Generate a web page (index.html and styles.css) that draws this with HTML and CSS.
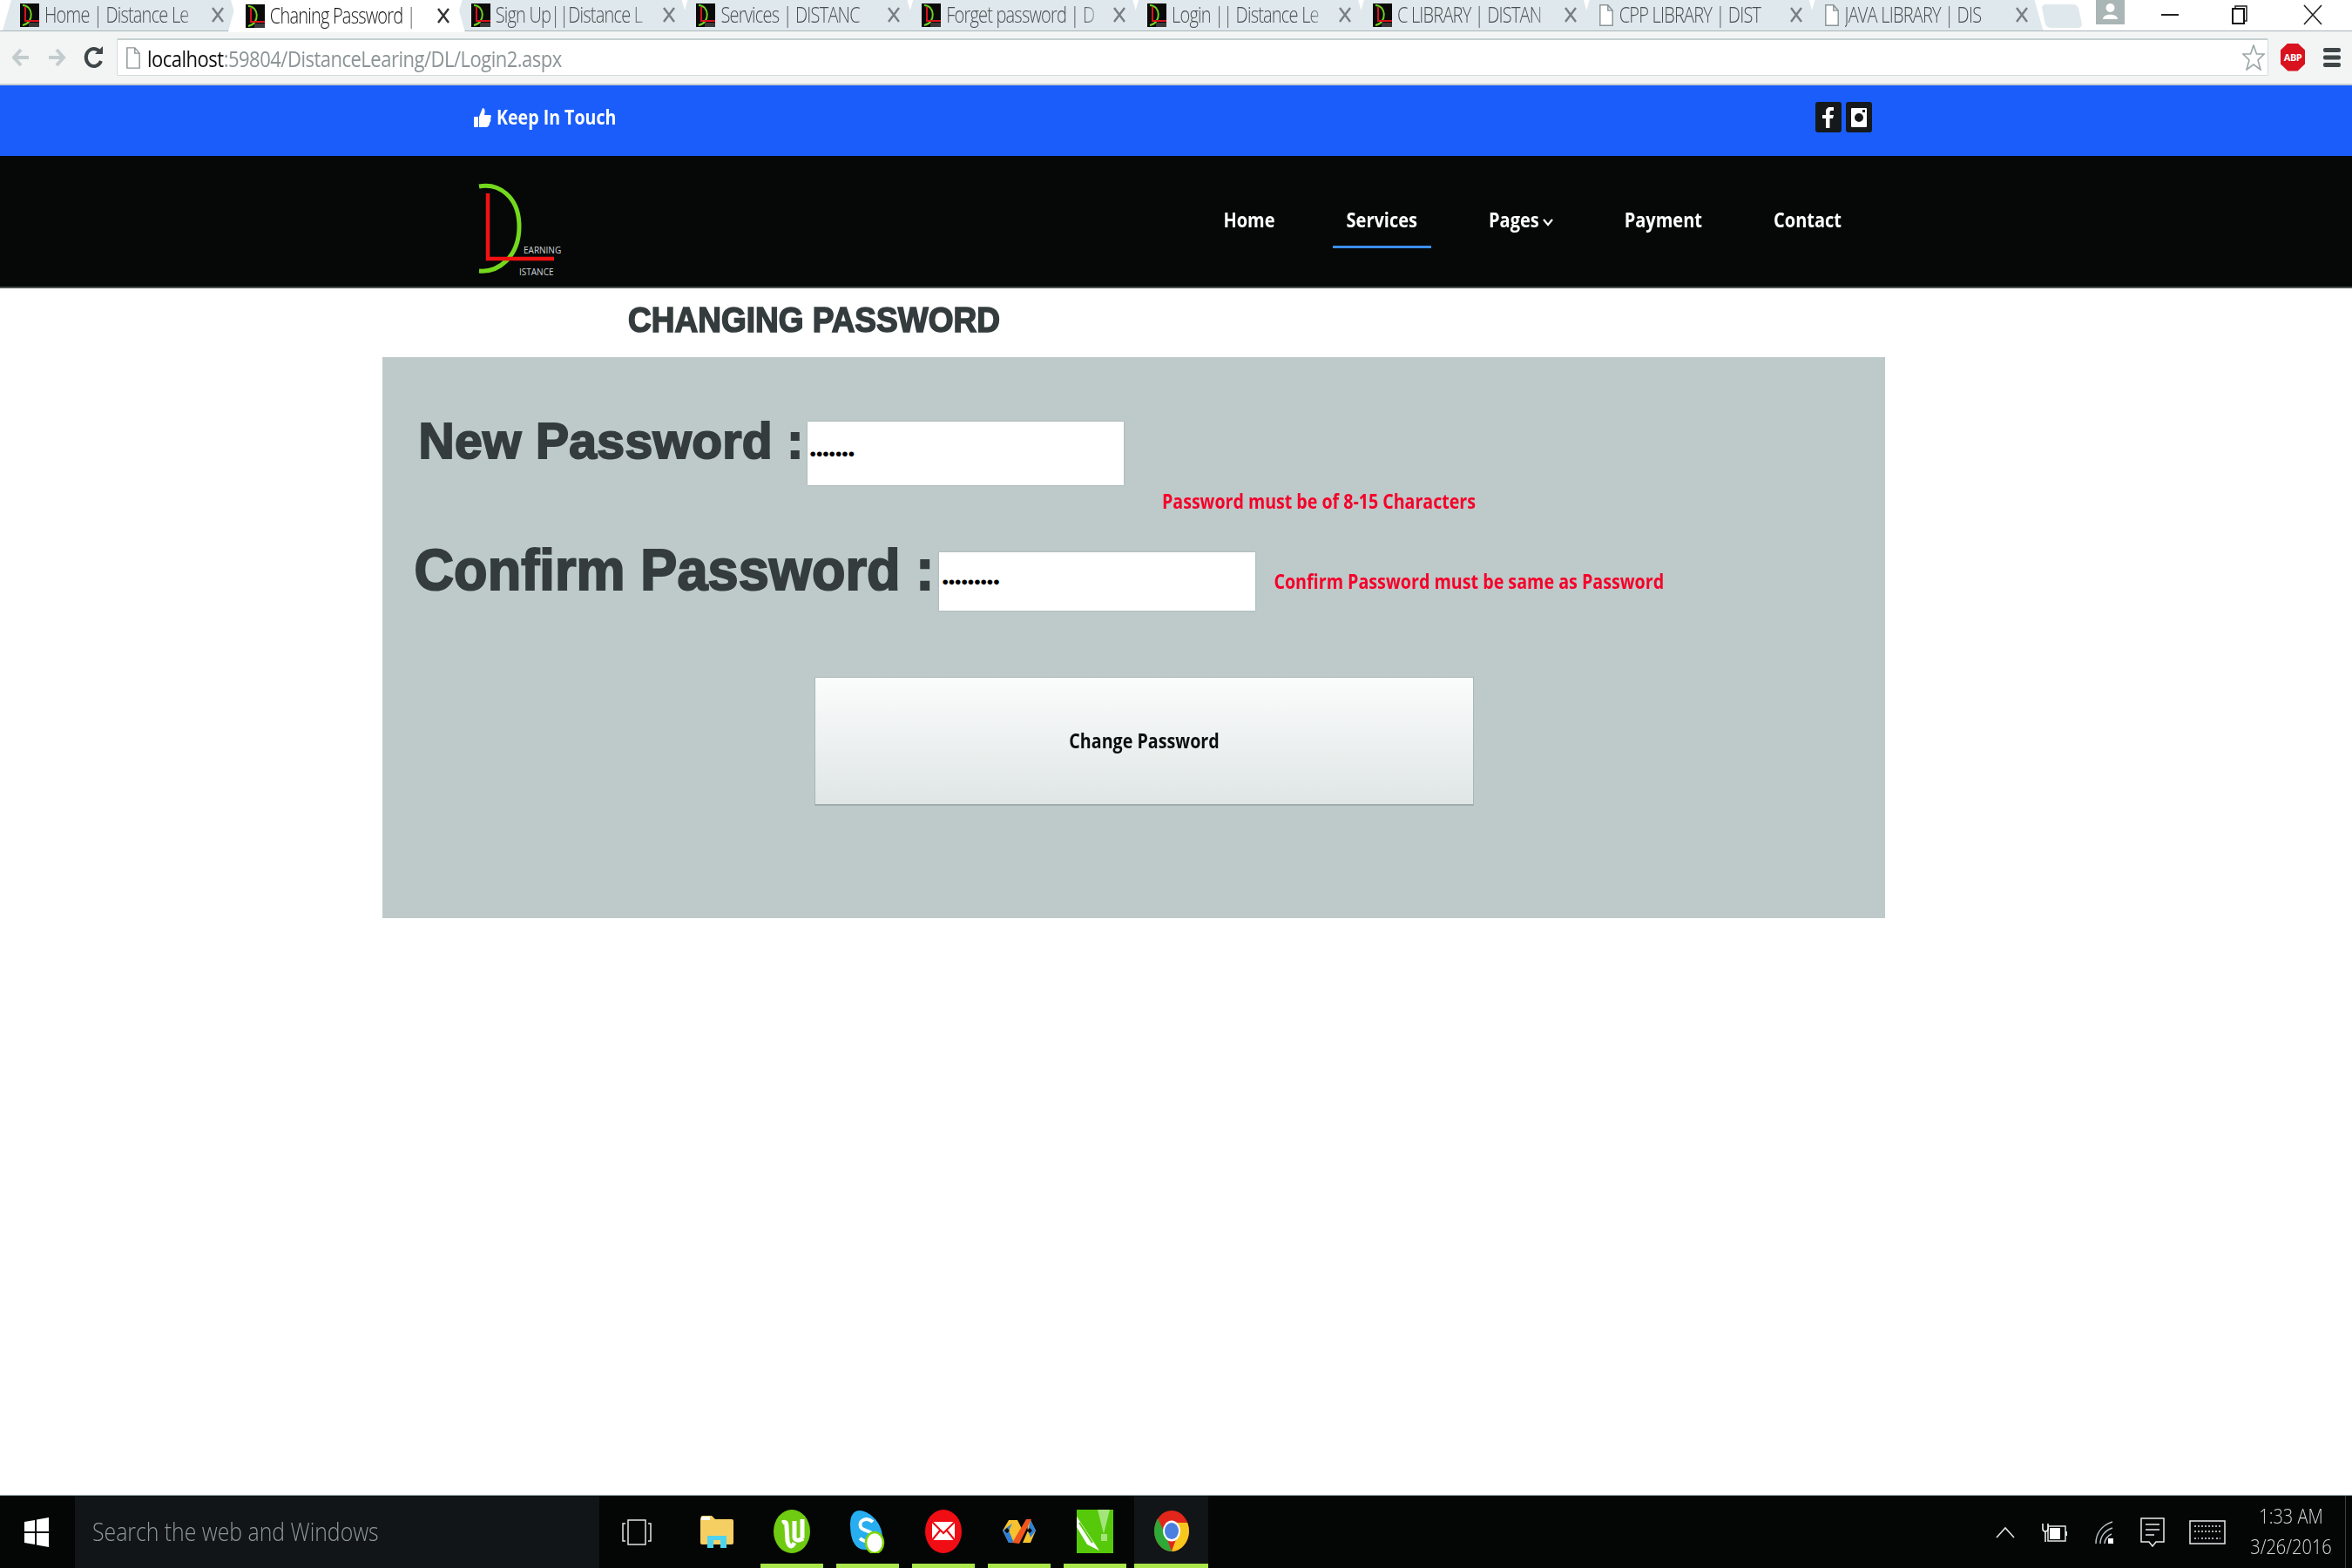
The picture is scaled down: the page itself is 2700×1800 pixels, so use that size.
FILE: index.html
```html
<!DOCTYPE html>
<html lang="en">
<head>
<meta charset="utf-8">
<title>Changing Password</title>
<link rel="stylesheet" href="styles.css">
</head>
<body>
<svg class="defs" width="0" height="0" aria-hidden="true">
  <symbol id="dl" viewBox="0 0 22 27">
    <rect width="22" height="27" fill="#0a0a0a"/>
    <path d="M3 2C15 2 17 22 3 25" fill="none" stroke="#6fd11e" stroke-width="2"/>
    <path d="M6 4V20H22" fill="none" stroke="#d8121e" stroke-width="2"/>
    <rect x="10" y="22" width="12" height="5" fill="#3a3a3a"/>
  </symbol>
  <symbol id="doc" viewBox="0 0 20 28">
    <path d="M2 1H12L18 8V27H2Z M12 1V8H18" fill="#fff" stroke="#8b9496" stroke-width="1.6"/>
  </symbol>
  <symbol id="x" viewBox="0 0 14 20">
    <path d="M1 2L13 18M13 2L1 18" fill="none" stroke="currentColor" stroke-width="2.4"/>
  </symbol>
</svg>

<div class="tabstrip">
  <div class="tab"><svg class="fav"><use href="#dl"/></svg><span class="tab-title"><span class="tab-text">Home | Distance Le</span></span><svg class="tab-x"><use href="#x"/></svg></div>
  <div class="tab tab-active"><svg class="fav"><use href="#dl"/></svg><span class="tab-title"><span class="tab-text">Chaning Password |</span></span><svg class="tab-x"><use href="#x"/></svg></div>
  <div class="tab"><svg class="fav"><use href="#dl"/></svg><span class="tab-title"><span class="tab-text">Sign Up||Distance L</span></span><svg class="tab-x"><use href="#x"/></svg></div>
  <div class="tab"><svg class="fav"><use href="#dl"/></svg><span class="tab-title"><span class="tab-text">Services | DISTANC</span></span><svg class="tab-x"><use href="#x"/></svg></div>
  <div class="tab"><svg class="fav"><use href="#dl"/></svg><span class="tab-title"><span class="tab-text">Forget password | D</span></span><svg class="tab-x"><use href="#x"/></svg></div>
  <div class="tab"><svg class="fav"><use href="#dl"/></svg><span class="tab-title"><span class="tab-text">Login || Distance Le</span></span><svg class="tab-x"><use href="#x"/></svg></div>
  <div class="tab"><svg class="fav"><use href="#dl"/></svg><span class="tab-title"><span class="tab-text">C LIBRARY | DISTAN</span></span><svg class="tab-x"><use href="#x"/></svg></div>
  <div class="tab"><svg class="fav fav-doc"><use href="#doc"/></svg><span class="tab-title"><span class="tab-text">CPP LIBRARY | DIST</span></span><svg class="tab-x"><use href="#x"/></svg></div>
  <div class="tab"><svg class="fav fav-doc"><use href="#doc"/></svg><span class="tab-title"><span class="tab-text">JAVA LIBRARY | DIS</span></span><svg class="tab-x"><use href="#x"/></svg></div>
  <div class="newtab"></div>
  <div class="avatar"><svg viewBox="0 0 33 28" width="33" height="28"><circle cx="16.5" cy="9" r="5" fill="#fff"/><path d="M8 22C8 15 25 15 25 22Z" fill="#fff"/></svg></div>
  <div class="winctl">
    <svg width="20" height="4" viewBox="0 0 20 4"><rect y="1" width="20" height="2" fill="#222"/></svg>
    <svg width="18" height="22" viewBox="0 0 18 22"><path d="M4 4V1H17V18H14" fill="none" stroke="#222" stroke-width="1.5"/><rect x="1" y="4" width="13" height="17" fill="#fff" stroke="#111" stroke-width="2"/></svg>
    <svg width="24" height="24" viewBox="0 0 24 24"><path d="M2 1L22 23M22 1L2 23" stroke="#222" stroke-width="1.6"/></svg>
  </div>
</div>

<div class="toolbar">
  <svg class="tb-btn" width="20" height="24" viewBox="0 0 20 24"><path d="M10 3L2 12L10 21M2 12H19" fill="none" stroke="#c3cccd" stroke-width="4"/></svg>
  <svg class="tb-btn" width="22" height="24" viewBox="0 0 22 24"><path d="M11 3L19 12L11 21M19 12H2" fill="none" stroke="#c3cccd" stroke-width="4"/></svg>
  <svg class="tb-btn" width="23" height="28" viewBox="0 0 23 28"><path d="M19 8A9 10 0 1 0 20 18" fill="none" stroke="#3f4648" stroke-width="4"/><path d="M13 10H22V1Z" fill="#3f4648"/></svg>
  <div class="omnibox">
    <svg class="omni-doc"><use href="#doc"/></svg>
    <span class="url st"><span class="url-host">localhost</span>:59804/DistanceLearing/DL/Login2.aspx</span>
    <svg class="star" width="26" height="30" viewBox="0 0 26 30"><path d="M13 1L16.5 11H25L18 18L21 29L13 23L5 29L8 18L1 11H9.500Z" fill="#fff" stroke="#9ca6a8" stroke-width="1.6"/></svg>
  </div>
  <div class="abp"><span class="abp-label">ABP</span></div>
  <svg class="menu" width="20" height="22" viewBox="0 0 20 22"><rect width="20" height="5" rx="2" fill="#3f4648"/><rect y="8.500" width="20" height="5" rx="2" fill="#3f4648"/><rect y="17" width="20" height="5" rx="2" fill="#3f4648"/></svg>
</div>

<header class="topbar">
  <div class="touch">
    <svg width="20" height="24" viewBox="0 0 20 24"><path d="M0 11H5V23H0Z M6 11L10 1C13 1 13 5 12 9H19C20 9 20 12 19 13C20 15 19 17 18 18C18 20 17 22 15 23H6Z" fill="#fff"/></svg>
    <span class="st">Keep In Touch</span>
  </div>
  <div class="social">
    <span class="social-btn"><svg width="14" height="24" viewBox="0 0 14 24"><path d="M4 24V13H0V9H4V5C4 2 6 0 9 0H13V4H10C9 4 8.500 5 8.500 6V9H13L12 13H8.500V24Z" fill="#fff"/></svg></span>
    <span class="social-btn"><svg width="20" height="24" viewBox="0 0 20 24"><path fill-rule="evenodd" d="M2 1H18Q19 1 19 2V22Q19 23 18 23H2Q1 23 1 22V2Q1 1 2 1ZM10 7A5 5 0 1 0 10 17A5 5 0 1 0 10 7ZM14 3V6H17V3Z" fill="#fff"/></svg></span>
  </div>
</header>

<nav class="navbar">
  <svg class="logo" width="110" height="118" viewBox="0 0 110 118">
    <path d="M4 9C26 5 50 20 50 55C50 90 26 108 4 106" fill="none" stroke="#74d91d" stroke-width="5"/>
    <path d="M14 17V92H90" fill="none" stroke="#f01212" stroke-width="4.500"/>
    <text class="logo-text" x="55" y="86">EARNING</text>
    <text class="logo-text" x="50" y="111">ISTANCE</text>
  </svg>
  <ul class="menu-list">
    <li class="menu-item"><span class="st">Home</span></li>
    <li class="menu-item menu-current"><span class="st">Services</span></li>
    <li class="menu-item"><span class="st">Pages</span><svg class="chev" width="12" height="9" viewBox="0 0 12 9"><path d="M1 1L6 7L11 1" fill="none" stroke="#fff" stroke-width="2.200"/></svg></li>
    <li class="menu-item"><span class="st">Payment</span></li>
    <li class="menu-item"><span class="st">Contact</span></li>
  </ul>
</nav>

<main class="page">
  <h1 class="title"><span class="title-text">CHANGING PASSWORD</span></h1>
  <form class="panel">
    <div class="row row-new">
      <label class="field-label label-new" for="np">New Password :</label>
      <input class="field field-new" id="np" type="password" value="1234567">
    </div>
    <div class="err err-new"><span class="st">Password must be of 8-15 Characters</span></div>
    <div class="row row-confirm">
      <label class="field-label label-confirm" for="cp">Confirm Password :</label>
      <input class="field field-confirm" id="cp" type="password" value="123456789">
      <span class="err err-confirm"><span class="st">Confirm Password must be same as Password</span></span>
    </div>
    <button class="submit" type="button"><span class="st">Change Password</span></button>
  </form>
</main>

<footer class="taskbar">
  <div class="start"><svg width="28" height="34" viewBox="0 0 28 34"><path d="M0 5L12 3V16H0Z M14 2.600L28 0V16H14Z M0 18H12V31L0 29Z M14 18H28V34L14 31.500Z" fill="#fff"/></svg></div>
  <div class="search"><span class="st">Search the web and Windows</span></div>
  <div class="taskview"><svg width="34" height="30" viewBox="0 0 34 30"><rect x="7" y="1" width="20" height="28" fill="none" stroke="#dfe5e5" stroke-width="1.500"/><path d="M4 5H1V25H4M30 5H33V25H30" fill="none" stroke="#dfe5e5" stroke-width="1.500"/></svg></div>
  <div class="app app-plain"><svg width="39" height="38" viewBox="0 0 39 38"><path d="M1 6Q1 1 4 1H14L18 5H37Q39 5 39 7V32Q39 34 37 34H3Q1 34 1 32Z" fill="#f6cf62"/><rect x="2" y="2" width="10" height="4" fill="#fff"/><path d="M9 38V24H31V38H24V29H16V38Z" fill="#4fd3ee"/></svg></div>
  <div class="app"><svg width="42" height="50" viewBox="0 0 42 50"><ellipse cx="21" cy="25" rx="21" ry="25" fill="#6fcb12"/><path d="M10 15C14 13 15 15 15 20L16 36C18 43 21 44 24 38M24 13V32C25 36 29 36 34 33M33 11V33" fill="none" stroke="#fff" stroke-width="5"/></svg></div>
  <div class="app"><svg width="42" height="50" viewBox="0 0 42 50"><path d="M12 1C20 1 38 12 38 33C38 42 28 46 18 46C6 46 1 34 1 16C1 7 5 1 12 1Z" fill="#27aef0"/><path d="M27 14C20 8 10 12 13 20C15 25 27 24 28 30C29 37 18 38 12 33" fill="none" stroke="#fff" stroke-width="4"/><ellipse cx="29" cy="38" rx="10" ry="12" fill="#fff" stroke="#7fd400" stroke-width="2.500"/></svg></div>
  <div class="app"><svg width="42" height="50" viewBox="0 0 42 50"><ellipse cx="21" cy="25" rx="21" ry="25" fill="#f00d14"/><rect x="8" y="14" width="26" height="21" fill="#fff"/><path d="M8 14L21 27L34 14M8 35L17 24M34 35L25 24" fill="none" stroke="#f00d14" stroke-width="2.200"/></svg></div>
  <div class="app"><svg width="40" height="30" viewBox="0 0 40 30"><path d="M8 2H18L24 14L18 28H8L1 14Z" fill="#f6c22f"/><path d="M1 14L8 28H14L8 14L12 6Z" fill="#2f80d8"/><path d="M28 2H33L39 14L33 28H24L30 14Z" fill="#f6c22f"/><path d="M33 2L39 14L33 22L30 14Z" fill="#2f80d8"/><path d="M12 28L28 1H34L20 29Z" fill="#f0561e"/><path d="M6 11L9 14L6 17L3 14ZM32 11L35 14L32 17L29 14Z" fill="#050505"/></svg></div>
  <div class="app app-corel"><svg width="42" height="50" viewBox="0 0 42 50"><rect width="42" height="50" fill="#56c90a"/><path d="M24 0L31 28L38 0Z" fill="#a3e57a"/><path d="M28 28H35V36H28Z" fill="#a3e57a"/><path d="M0 8L26 47L12 40L0 20Z" fill="#fff"/><path d="M3 15L18 38" stroke="#56c90a" stroke-width="2"/></svg></div>
  <div class="app app-chrome"><svg width="40" height="47" viewBox="0 0 40 47"><ellipse cx="20" cy="23.500" rx="20" ry="23.500" fill="#e2261c"/><path d="M20 47C9 47 0 36 0 23.500C0 18 2 13 4 9L14 30L20 47Z" fill="#2ea836"/><path d="M20 47C31 47 40 36 40 23.500C40 20 39 16 38 14H20L26 30Z" fill="#f8c71e"/><ellipse cx="20" cy="23.500" rx="10" ry="12" fill="#fff"/><ellipse cx="20" cy="23.500" rx="8" ry="9.500" fill="#4a7fe0"/></svg></div>
  <div class="tray">
    <svg width="22" height="14" viewBox="0 0 22 14"><path d="M1 13L11 2L21 13" fill="none" stroke="#dfe5e5" stroke-width="1.600"/></svg>
    <svg width="29" height="22" viewBox="0 0 29 22"><rect x="7" y="4" width="20" height="17" fill="none" stroke="#dfe5e5" stroke-width="1.500"/><rect x="9" y="6" width="12" height="13" fill="#fff"/><rect x="27" y="10" width="2" height="5" fill="#dfe5e5"/><path d="M1 1V7Q1 10 4 10Q7 10 7 7V1M4 10V22" fill="#050505" stroke="#fff" stroke-width="1.500"/></svg>
    <svg width="21" height="26" viewBox="0 0 21 26"><path d="M1 26C1 14 8 5 20 1M6 26C6 18 11 11 20 8M11 26C11 22 14 17 19 15" fill="none" stroke="#b9c2c2" stroke-width="1.500"/><rect x="15" y="20" width="6" height="6" fill="#fff"/></svg>
    <svg width="28" height="34" viewBox="0 0 28 34"><path d="M1 1H27V28H18L14 33L10 28H1Z" fill="none" stroke="#e6ebeb" stroke-width="1.500"/><path d="M6 8H22M6 14H22M6 20H16" stroke="#e6ebeb" stroke-width="1.500"/></svg>
    <svg width="42" height="28" viewBox="0 0 42 28"><rect x="1" y="1" width="40" height="26" fill="none" stroke="#e6ebeb" stroke-width="1.500"/><path d="M6 7H36M6 13H36M6 21H11M14 21H28M31 21H36" stroke="#dfe5e5" stroke-width="1.500" stroke-dasharray="2 2"/></svg>
    <div class="clock"><span class="st">1:33 AM</span><span class="st">3/26/2016</span></div>
  </div>
</footer>
</body>
</html>
```
FILE: styles.css
```css
* { box-sizing: border-box; }
html, body { margin: 0; padding: 0; }
body {
  width: 2700px;
  height: 1800px;
  display: flex;
  flex-direction: column;
  overflow: hidden;
  background: #fff;
  font-family: "Open Sans", "Liberation Sans", sans-serif;
}
.defs { position: absolute; }
.st { display: inline-block; transform: scaleY(1.18); }

/* tab strip */
.tabstrip {
  height: 37px;
  flex: none;
  display: flex;
  padding-left: 3px;
  background: linear-gradient(#fff 0 35px, #a9b6ba 35px 36px, #f3f5f5 36px);
  overflow: hidden;
}
.tab {
  flex: 0 0 273px;
  min-width: 0;
  height: 35px;
  margin-right: -14.200px;
  padding: 0 19px 1px 20px;
  display: flex;
  align-items: center;
  gap: 6px;
  color: #4a5052;
  background: #dfe8ec;
  clip-path: polygon(0 100%, 10px 0, 262px 0, 272px 100%);
  font-size: 20px;
  font-weight: 300;
}
.tab-active {
  position: relative;
  height: 37px;
  color: #151515;
  background: #fff;
  z-index: 1;
}
.fav { flex: none; width: 22px; height: 27px; }
.fav-doc { width: 18px; }
.tab-title {
  flex: 1;
  min-width: 0;
  white-space: nowrap;
  line-height: 36px;
  -webkit-mask-image: linear-gradient(90deg, #000 84%, transparent 98%);
  mask-image: linear-gradient(90deg, #000 84%, transparent 98%);
}
.tab-text { display: inline-block; transform: scaleY(1.25); letter-spacing: -.8px; }
.tab-x { flex: none; width: 14px; height: 20px; color: #777f82; }
.tab-active .tab-x { color: #333; }
.newtab {
  flex: none;
  width: 42px;
  height: 27px;
  margin: 5px 0 0 14px;
  background: #dfe8ec;
  border-radius: 5px;
  transform: skewX(12deg);
}
.avatar {
  flex: none;
  width: 33px;
  height: 28px;
  margin-left: 18px;
  background: #aab5b5;
}
.winctl {
  flex: none;
  display: grid;
  grid-template-columns: 81px 81px 30px;
  margin-left: 42px;
  height: 37px;
  align-items: center;
  justify-items: start;
  padding-bottom: 3px;
}

/* toolbar */
.toolbar {
  height: 61px;
  flex: none;
  display: flex;
  align-items: center;
  padding: 0 13px 2px 14px;
  background: #f3f5f5;
  border-bottom: 2px solid #c9d0d0;
}
.tb-btn { flex: none; margin-right: 20px; }
.omnibox {
  width: 2471px;
  height: 43px;
  margin-left: -5px;
  padding: 0 0 0 9px;
  display: flex;
  align-items: center;
  background: #fff;
  border: 1px solid #d4dada;
  border-top: 2px solid #c6cfcf;
  border-radius: 2px;
}
.omni-doc { flex: none; width: 18px; height: 25px; }
.url {
  margin-left: 7px;
  font-size: 22px;
  color: #8b9496;
  letter-spacing: -.5px;
}
.url-host { color: #111; }
.star { margin-left: auto; margin-right: 3px; }
.abp {
  flex: none;
  width: 28px;
  height: 32px;
  margin-left: 14px;
  display: flex;
  align-items: center;
  justify-content: center;
  background: #d8121e;
  clip-path: polygon(30% 0, 70% 0, 100% 25%, 100% 75%, 70% 100%, 30% 100%, 0 75%, 0 25%);
}
.abp-label { color: #fff; font-size: 11px; font-weight: 700; letter-spacing: -.5px; }
.menu { flex: none; margin-left: 21px; }

/* site header */
.topbar {
  flex: none;
  height: 81px;
  padding: 0 551px 8px 544px;
  display: flex;
  align-items: center;
  justify-content: space-between;
  background: #1a5dfb;
  color: #fff;
}
.touch {
  display: flex;
  align-items: center;
  gap: 6px;
  font-size: 19.600px;
  font-weight: 700;
}
.social { display: flex; gap: 5px; }
.social-btn {
  width: 30px;
  height: 35px;
  display: flex;
  align-items: center;
  justify-content: center;
  background: #16191b;
  border-radius: 3px;
}
.navbar {
  flex: none;
  height: 152px;
  padding: 26px 570px 0 546px;
  display: flex;
  justify-content: space-between;
  align-items: flex-start;
  background: #060808;
  border-bottom: 2px solid #4a4f50;
}
.logo { flex: none; }
.logo-text { font-family: "Open Sans", sans-serif; font-size: 10px; fill: #cfd3d3; }
.menu-list {
  list-style: none;
  margin: 20px 0 0;
  padding: 0;
  display: flex;
  gap: 50px;
}
.menu-item {
  height: 60px;
  padding: 14px 16px 0;
  line-height: 27px;
  font-size: 20px;
  font-weight: 700;
  color: #fff;
  white-space: nowrap;
}
.menu-current { border-bottom: 3px solid #3b8ff0; }
.chev { margin-left: 4px; }

/* page */
.page { flex: 1; min-height: 0; }
.title {
  height: 79px;
  margin: 0;
  padding: 0 0 5px 721px;
  display: flex;
  align-items: center;
  font-family: "Liberation Sans", Arial, sans-serif;
  font-size: 37px;
  font-weight: 700;
  color: #343c3e;
}
.title-text {
  display: inline-block;
  transform: scaleY(1.12);
  -webkit-text-stroke: 1.500px #343c3e;
  white-space: nowrap;
}
.panel {
  width: 1725px;
  height: 644px;
  margin-left: 439px;
  padding: 74px 0 0 36.500px;
  background: #bdcac9;
}
.row { display: flex; align-items: flex-start; }
.row-new { margin-left: 5px; gap: 4px; }
.row-confirm { margin-top: 46px; gap: 6px; }
.field-label {
  display: inline-block;
  font-family: "Liberation Sans", Arial, sans-serif;
  font-weight: 700;
  color: #343c3e;
  -webkit-text-stroke: 2px #343c3e;
  white-space: nowrap;
}
.label-new { font-size: 57px; line-height: 44px; letter-spacing: .35px; }
.label-confirm { font-size: 63px; line-height: 40px; letter-spacing: .1px; transform: scaleY(1.06); }
.field {
  border: 0;
  background: #fff;
  box-shadow: 0 0 2px #9aa8a8;
  padding: 0 0 0 3px;
  font-family: "Liberation Sans", Arial, sans-serif;
  font-size: 21px;
  color: #000;
  width: 363px;
}
.field-new { height: 73px; }
.field-confirm { height: 67px; }
.err { font-size: 19.600px; font-weight: 700; color: #f5002a; white-space: nowrap; }
.err-new { margin: 7px 0 0 858.500px; line-height: 24px; }
.err-confirm { margin-left: 15px; align-self: center; line-height: 24px; font-size: 19.700px; }
.submit {
  display: block;
  width: 757px;
  height: 148px;
  margin: 76px 0 0 459.500px;
  border: 1px solid #a9b6b5;
  border-bottom: 2px solid #9faeac;
  background: linear-gradient(#fbfcfc, #dfe6e5);
  font-family: "Open Sans", sans-serif;
  font-size: 19.700px;
  font-weight: 700;
  color: #0b0f10;
}

/* taskbar */
.taskbar {
  flex: none;
  height: 84px;
  display: flex;
  align-items: stretch;
  background: #040606;
  border-top: 1px solid #9fb0b0;
}
.start { flex: none; width: 86px; padding-left: 28px; display: flex; align-items: center; }
.search {
  flex: none;
  width: 602px;
  padding: 0 0 3px 20px;
  display: flex;
  align-items: center;
  background: #111517;
  color: #8e9899;
  font-size: 24.800px;
  font-weight: 300;
}
.taskview { flex: none; width: 85px; display: flex; align-items: center; justify-content: center; }
.app {
  flex: none;
  width: 72px;
  margin-right: 15px;
  padding-top: 3px;
  display: flex;
  align-items: center;
  justify-content: center;
  border-bottom: 5px solid #a8e64a;
}
.app-plain { margin-left: 13px; border-bottom-color: transparent; }
.app-corel { margin-right: 9px; }
.app-chrome { width: 85px; margin-right: 0; background: #111517; }
.tray {
  flex: none;
  margin-left: auto;
  display: grid;
  grid-template-columns: 53px 61px 52px 56px 70px 94px;
  justify-items: start;
  align-items: center;
  padding-right: 23px;
  background: linear-gradient(#3a3f40, #3a3f40) right 7px top 0 / 1px 100% no-repeat;
}
.clock {
  width: 94px;
  display: flex;
  flex-direction: column;
  align-items: center;
  gap: 13px;
  font-size: 20px;
  font-weight: 300;
  line-height: 22px;
  color: #d4dada;
  white-space: nowrap;
}
```
